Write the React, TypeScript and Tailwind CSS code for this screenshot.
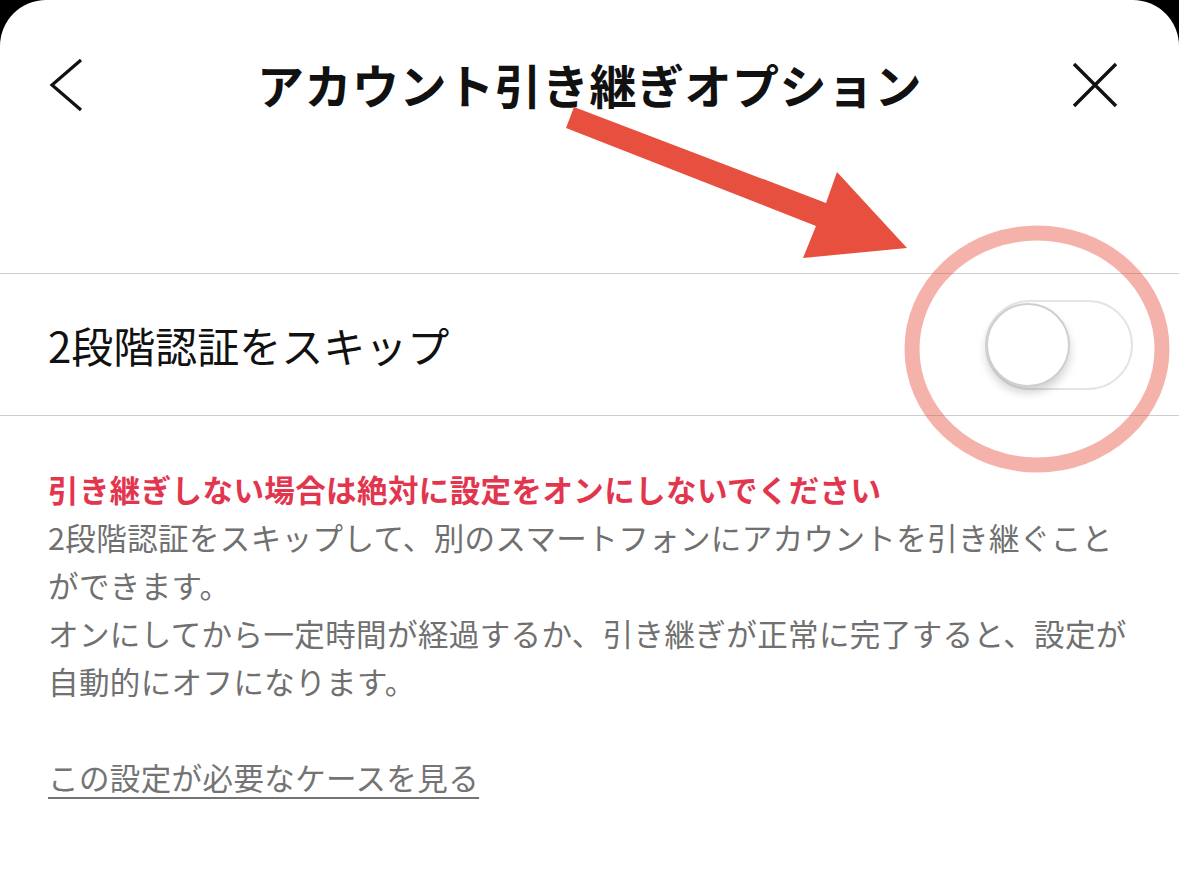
import React from 'react';

const jp = { fontFamily: '"Noto Sans CJK JP", "Noto Sans", sans-serif' };

const Overlay = () => (
  <svg
    className="absolute inset-0 pointer-events-none"
    width={1179}
    height={886}
    viewBox="0 0 1179 886"
  >
    <ellipse
      cx={1037}
      cy={349}
      rx={125}
      ry={116}
      fill="none"
      stroke="#e8503f"
      strokeOpacity={0.44}
      strokeWidth={15}
    />
    <polygon
      points="574,107 566,128 816,226 803,258 907,248 837,172 826,203"
      fill="#e74f3f"
    />
  </svg>
);

const Toggle = () => (
  <div className="relative w-[148px] h-[90px] rounded-full border-2 border-[#e4e4e4] bg-white">
    <div className="absolute left-[-1px] top-[1px] w-[84px] h-[84px] rounded-full bg-white border-2 border-[#cfcfcf] shadow-[0_6px_10px_rgba(0,0,0,0.18)]" />
  </div>
);

export default function App() {
  return (
    <div className="w-[1179px] h-[886px] bg-black overflow-hidden" style={jp}>
      <div className="relative h-full bg-white rounded-t-[46px]">
        <header className="grid grid-cols-[1fr_auto_1fr] items-center h-[166px] px-[48px]">
          <svg width={36} height={54} viewBox="0 0 36 54" className="justify-self-start mt-[4px]">
            <path d="M33 2 L4 27 L33 52" fill="none" stroke="#111" strokeWidth={3.2} />
          </svg>
          <h1 className="text-[47px] font-bold text-[#111] leading-none tracking-[0.5px]">
            アカウント引き継ぎオプション
          </h1>
          <svg width={48} height={48} viewBox="0 0 48 48" className="justify-self-end mr-[12px] mt-[4px]">
            <path d="M3 3 L45 45 M45 3 L3 45" fill="none" stroke="#111" strokeWidth={3.4} />
          </svg>
        </header>

        <div className="mt-[107px] h-[143px] border-y border-[#cdcdcd] flex items-center justify-between pl-[48px] pr-[46px]">
          <span className="text-[42px] text-[#111] leading-none">2段階認証をスキップ</span>
          <Toggle />
        </div>

        <div className="pt-[49px] px-[48px] text-[30.5px] leading-[48px] tracking-[0.4px]">
          <p className="font-bold text-[#e2364f]">引き継ぎしない場合は絶対に設定をオンにしないでください</p>
          <div className="text-[#707070] whitespace-nowrap">
            <p>2段階認証をスキップして、別のスマートフォンにアカウントを引き継ぐこと</p>
            <p>ができます。</p>
            <p>オンにしてから一定時間が経過するか、引き継ぎが正常に完了すると、設定が</p>
            <p>自動的にオフになります。</p>
          </div>
          <p className="mt-[48px]">
            <a className="text-[#747474] underline decoration-2 underline-offset-[7px]">
              この設定が必要なケースを見る
            </a>
          </p>
        </div>

        <Overlay />
      </div>
    </div>
  );
}
